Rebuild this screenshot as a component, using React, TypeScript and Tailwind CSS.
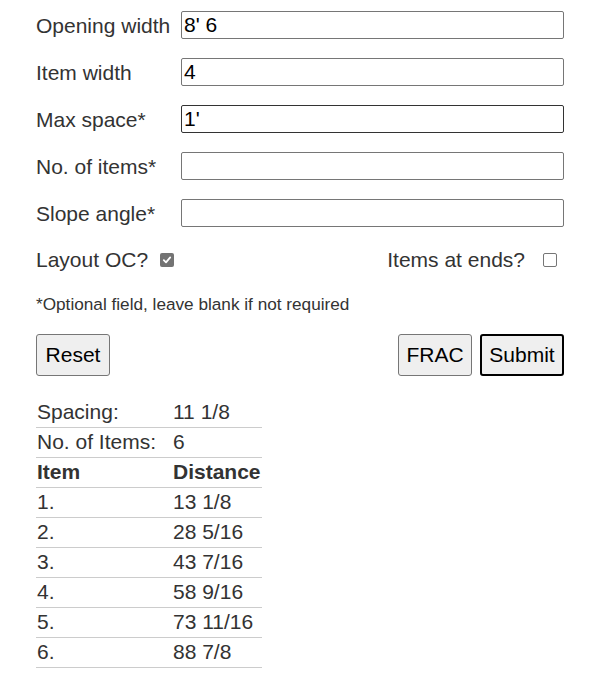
import React from "react"

const fields = [
  { label: "Opening width", value: "8' 6", dark: false },
  { label: "Item width", value: "4", dark: false },
  { label: "Max space*", value: "1'", dark: true },
  { label: "No. of items*", value: "", dark: false },
  { label: "Slope angle*", value: "", dark: false },
]

const rows = [
  ["1.", "13 1/8"],
  ["2.", "28 5/16"],
  ["3.", "43 7/16"],
  ["4.", "58 9/16"],
  ["5.", "73 11/16"],
  ["6.", "88 7/8"],
]

function Check({ checked }: { checked: boolean }) {
  if (checked) {
    return (
      <span className="flex h-[14px] w-[14px] items-center justify-center rounded-[2px] bg-[#737373]">
        <svg width="10" height="10" viewBox="0 0 10 10">
          <path d="M1.8 5.2 L4 7.4 L8.2 2.4" fill="none" stroke="white" strokeWidth="1.8" strokeLinecap="round" strokeLinejoin="round" />
        </svg>
      </span>
    )
  }
  return <span className="block h-[14px] w-[14px] rounded-[2px] border border-[#767676] bg-white" />
}

export default function App() {
  return (
    <div className="min-h-screen bg-white font-['Liberation_Sans',Arial,sans-serif] text-[#333] pl-9 pt-[11px]">
      <div className="w-[528px]">
        {/* Inputs */}
        <div className="flex flex-col gap-[19px]">
          {fields.map((f) => (
            <div key={f.label} className="flex h-[28px] items-center">
              <label className="w-[145px] text-[21px] leading-none">{f.label}</label>
              <div
                className={
                  "flex h-[28px] flex-1 items-center rounded-[2px] border px-[2px] text-[21px] text-black " +
                  (f.dark ? "border-[#333]" : "border-[#767676]")
                }
              >
                {f.value}
              </div>
            </div>
          ))}
        </div>

        {/* Checkboxes */}
        <div className="mt-[21px] flex h-[24px] items-center justify-between text-[21px]">
          <div className="flex items-center gap-[12px]">
            <span>Layout OC?</span>
            <Check checked />
          </div>
          <div className="flex items-center gap-[18px] pr-[7px]">
            <span>Items at ends?</span>
            <Check checked={false} />
          </div>
        </div>

        <p className="mt-[22px] text-[17.2px] leading-[20px]">*Optional field, leave blank if not required</p>

        {/* Buttons */}
        <div className="mt-[20px] flex items-center justify-between">
          <button className="h-[42px] w-[74px] rounded-[3px] border border-[#767676] bg-[#efefef] text-[21px] text-black">
            Reset
          </button>
          <div className="flex gap-[8px]">
            <button className="h-[42px] w-[74px] rounded-[3px] border border-[#767676] bg-[#efefef] text-[21px] text-black">
              FRAC
            </button>
            <button className="h-[42px] w-[84px] rounded-[3px] border-2 border-black bg-[#efefef] text-[21px] text-black">
              Submit
            </button>
          </div>
        </div>
      </div>

      {/* Results */}
      <table className="mt-[21px] w-[226px] border-collapse text-[21px] leading-[24px]">
        <tbody>
          <tr className="h-[30px] border-b border-[#ccc]">
            <td className="w-[137px] p-0 pl-[1px]">Spacing:</td>
            <td className="p-0">11 1/8</td>
          </tr>
          <tr className="h-[30px] border-b border-[#ccc]">
            <td className="p-0 pl-[1px]">No. of Items:</td>
            <td className="p-0">6</td>
          </tr>
          <tr className="h-[30px] border-b border-[#ccc] font-bold">
            <td className="p-0 pl-[1px]">Item</td>
            <td className="p-0">Distance</td>
          </tr>
          {rows.map(([n, d]) => (
            <tr key={n} className="h-[30px] border-b border-[#ccc]">
              <td className="p-0 pl-[1px]">{n}</td>
              <td className="p-0">{d}</td>
            </tr>
          ))}
        </tbody>
      </table>
    </div>
  )
}
